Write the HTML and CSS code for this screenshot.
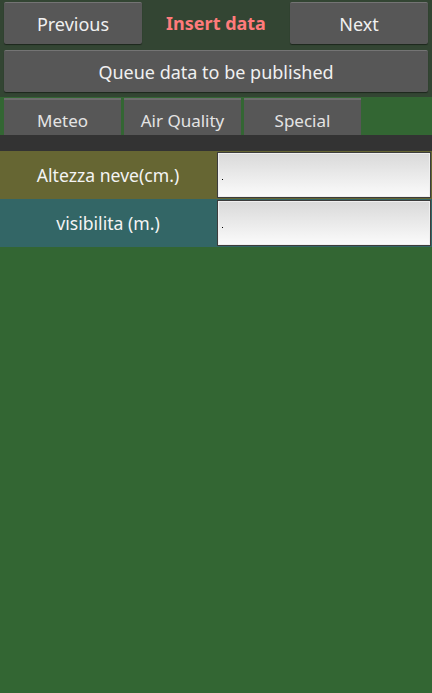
FILE: index.html
```html
<!DOCTYPE html>
<html>
<head>
<meta charset="utf-8">
<link rel="stylesheet" href="styles.css">
</head>
<body>
<div class="header">
  <div class="nav">
    <div class="btn">Previous</div>
    <div class="title">Insert data</div>
    <div class="btn">Next</div>
  </div>
  <div class="btn queue">Queue data to be published</div>
</div>
<div class="tabs">
  <div class="tab">Meteo</div>
  <div class="tab">Air Quality</div>
  <div class="tab">Special</div>
</div>
<div class="band"></div>
<div class="row olive">
  <div class="label">Altezza neve(cm.)</div>
  <div class="input"><span class="dot"></span></div>
</div>
<div class="row teal">
  <div class="label">visibilita (m.)</div>
  <div class="input"><span class="dot"></span></div>
</div>
</body>
</html>
```
FILE: styles.css
```css
html, body {
  margin: 0;
  padding: 0;
}
body {
  background: #336633;
  font-family: "Noto Sans", "Open Sans", "DejaVu Sans", sans-serif;
  width: 432px;
  height: 693px;
  overflow: hidden;
}
.header {
  background: #334533;
  padding: 2px 4px 5px 4px;
  display: flex;
  flex-direction: column;
  gap: 6px;
}
.nav {
  display: grid;
  grid-template-columns: 138px 1fr 138px;
  height: 42px;
}
.btn {
  background: #575757;
  border-top: 1px solid #747474;
  border-radius: 2px;
  box-shadow: 0 1px 1px rgba(0,0,0,0.45);
  color: #f0f0f0;
  font-size: 18px;
  display: flex;
  align-items: center;
  justify-content: center;
  box-sizing: border-box;
}
.title {
  color: #ff7b7b;
  font-weight: bold;
  font-size: 18px;
  display: flex;
  align-items: center;
  justify-content: center;
}
.queue {
  height: 42px;
}
.tabs {
  display: flex;
  gap: 3px;
  padding: 1px 4px 0 4px;
  height: 37px;
}
.tab {
  width: 117px;
  background: #575757;
  border-top: 2px solid #6c6c6c;
  box-sizing: border-box;
  color: #e4e4e4;
  font-size: 17px;
  display: flex;
  align-items: flex-end;
  justify-content: center;
  padding-bottom: 3px;
}
.band {
  height: 16px;
  background: #333333;
}
.row {
  display: flex;
  height: 48px;
}
.olive { background: #666633; }
.teal { background: #336666; }
.label {
  width: 216px;
  color: #f4f4f4;
  font-size: 17.6px;
  display: flex;
  align-items: center;
  justify-content: center;
}
.input {
  flex: 1;
  margin: 1px;
  border: 1px solid #3c3c3c;
  background: linear-gradient(#d9d9d9, #fbfbfb);
  box-shadow: inset 0 0 0 1px #efefef;
  position: relative;
}
.dot {
  position: absolute;
  left: 4px;
  top: 26px;
  width: 1px;
  height: 1px;
  background: #000;
}
```
